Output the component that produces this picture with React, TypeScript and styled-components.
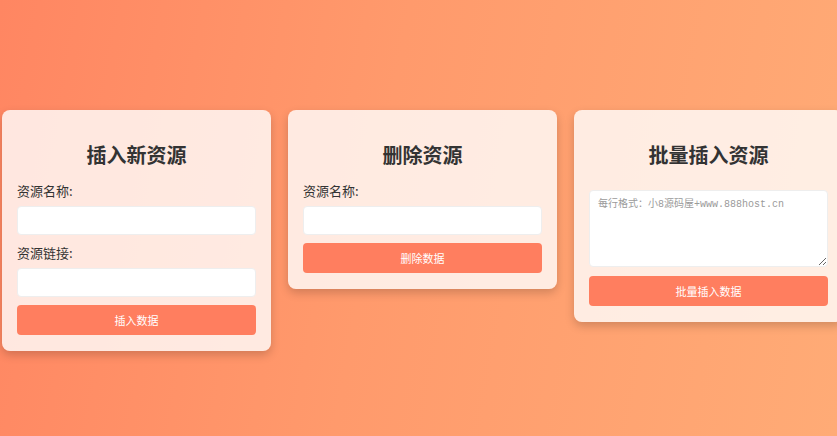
import styled, { createGlobalStyle } from "styled-components";

const GlobalStyle = createGlobalStyle`
  html, body {
    margin: 0;
    padding: 0;
    overflow: hidden;
  }
  body {
    min-height: 100vh;
    background: linear-gradient(100deg, #ff8662 0%, #ff9a6c 45%, #ffab76 100%);
    font-family: "Noto Sans CJK SC", "Noto Sans", sans-serif;
    color: #333;
  }
`;

const Page = styled.div`
  display: flex;
  align-items: flex-start;
  gap: 17px;
  padding: 110px 0 0 2px;
  min-height: 100vh;
  box-sizing: border-box;
`;

const Card = styled.section`
  flex: 0 0 269px;
  box-sizing: border-box;
  display: flex;
  flex-direction: column;
  padding: 31px 15px 16px 15px;
  background: rgba(255, 255, 255, 0.8);
  border-radius: 8px;
  box-shadow: 0 4px 10px rgba(0, 0, 0, 0.18);
`;

const Title = styled.h2`
  margin: 0 0 12px;
  font-size: 20px;
  line-height: 28px;
  font-weight: 700;
  text-align: center;
  color: #333;
`;

const Label = styled.label`
  display: block;
  margin: 0 0 5px;
  font-size: 13px;
  line-height: 20px;
  color: #333;
`;

const Input = styled.input`
  box-sizing: border-box;
  width: 100%;
  height: 29px;
  margin: 0 0 8px;
  padding: 0 8px;
  border: 1px solid #eee;
  border-radius: 4px;
  background: #fff;
  font-size: 13px;
  outline: none;
`;

const TextArea = styled.textarea`
  box-sizing: border-box;
  width: 100%;
  height: 77px;
  margin: 9px 0 9px;
  padding: 7px 8px;
  border: 1px solid #eee;
  border-radius: 4px;
  background: #fff;
  font-family: "Liberation Mono", "Noto Sans CJK SC", monospace;
  font-size: 10px;
  line-height: 14px;
  outline: none;

  &::placeholder {
    color: #9a9a9a;
  }
`;

const Button = styled.button`
  box-sizing: border-box;
  width: 100%;
  height: 30px;
  border: none;
  border-radius: 4px;
  background: #ff7e5f;
  color: #fff;
  font-family: "Noto Sans CJK SC", sans-serif;
  font-size: 11px;
  cursor: pointer;
`;

export default function App() {
  return (
    <>
      <GlobalStyle />
      <Page>
        <Card>
          <Title>插入新资源</Title>
          <Label>资源名称:</Label>
          <Input type="text" />
          <Label>资源链接:</Label>
          <Input type="text" />
          <Button>插入数据</Button>
        </Card>
        <Card>
          <Title>删除资源</Title>
          <Label>资源名称:</Label>
          <Input type="text" />
          <Button>删除数据</Button>
        </Card>
        <Card>
          <Title>批量插入资源</Title>
          <TextArea placeholder="每行格式：小8源码屋+www.888host.cn" />
          <Button>批量插入数据</Button>
        </Card>
      </Page>
    </>
  );
}
